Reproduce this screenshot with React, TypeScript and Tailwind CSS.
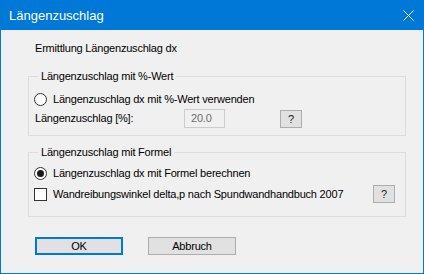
import React from "react";

const font = { fontFamily: '"Liberation Sans", Arial, sans-serif' };

function Radio({ checked }: { checked?: boolean }) {
  return (
    <span className="flex h-[13px] w-[13px] shrink-0 items-center justify-center rounded-full border border-[#333333] bg-white">
      {checked && <span className="h-[7px] w-[7px] rounded-full bg-[#1a1a1a]" />}
    </span>
  );
}

function HelpButton() {
  return (
    <button className="flex h-[18px] w-[22px] shrink-0 items-center justify-center border border-[#adadad] bg-[#e1e1e1] text-[11px] font-normal leading-none text-[#222222]">
      ?
    </button>
  );
}

export default function App() {
  return (
    <div className="flex h-[274px] w-[424px] flex-col bg-[#0078d7] text-black" style={font}>
      <div className="flex h-[30px] shrink-0 items-center justify-between pl-[9px] pr-[10px] text-white">
        <span className="text-[13px] leading-none">Längenzuschlag</span>
        <svg width="11" height="11" viewBox="0 0 11 11" className="mt-[1px]">
          <path d="M0.5 0.5 L10.5 10.5 M10.5 0.5 L0.5 10.5" stroke="white" strokeWidth="1" />
        </svg>
      </div>
      <div className="mx-[1px] mb-[1px] flex flex-1 flex-col bg-[#f0f0f0] pl-[27px] pr-[17px] pt-[12px] text-[11px] leading-[13px] tracking-[-0.2px]">
        <div className="ml-[7px] h-[13px]">Ermittlung Längenzuschlag dx</div>

        <div className="mt-[21px] flex h-[60px] flex-col border border-[#dcdcdc]">
          <span className="-mt-[7px] ml-[9px] w-fit bg-[#f0f0f0] px-[3px] leading-[13px]">
            Längenzuschlag mit %-Wert
          </span>
          <div className="mt-[6px] flex h-[20px] items-center pl-[5px]">
            <Radio />
            <span className="ml-[6px]">Längenzuschlag dx mit %-Wert verwenden</span>
          </div>
          <div className="flex h-[19px] items-center pl-[6px]">
            <span className="w-[149px]">Längenzuschlag [%]:</span>
            <div className="flex h-[19px] w-[41px] items-center border border-[#cccccc] bg-[#f0f0f0] pl-[6px] text-[#6d6d6d]">
              20.0
            </div>
            <div className="ml-[55px] mt-[1px]">
              <HelpButton />
            </div>
          </div>
        </div>

        <div className="mt-[16px] flex h-[65px] flex-col border border-[#dcdcdc]">
          <span className="-mt-[7px] ml-[9px] w-fit bg-[#f0f0f0] px-[3px] leading-[13px]">
            Längenzuschlag mit Formel
          </span>
          <div className="mt-[4px] flex h-[20px] items-center pl-[5px]">
            <Radio checked />
            <span className="ml-[6px]">Längenzuschlag dx mit Formel berechnen</span>
          </div>
          <div className="mt-[1px] flex h-[20px] items-center pl-[5px]">
            <span className="h-[13px] w-[13px] shrink-0 border border-[#333333] bg-white" />
            <span className="ml-[6px] w-[320px]">Wandreibungswinkel delta,p nach Spundwandhandbuch 2007</span>
            <HelpButton />
          </div>
        </div>

        <div className="mt-[20px] flex pl-[7px]">
          <button className="flex h-[18px] w-[88px] items-center justify-center border-2 border-[#0078d7] bg-[#e1e1e1] text-[11px]">
            OK
          </button>
          <button className="ml-[25px] flex h-[18px] w-[88px] items-center justify-center border border-[#adadad] bg-[#e1e1e1] text-[11px]">
            Abbruch
          </button>
        </div>
      </div>
    </div>
  );
}
